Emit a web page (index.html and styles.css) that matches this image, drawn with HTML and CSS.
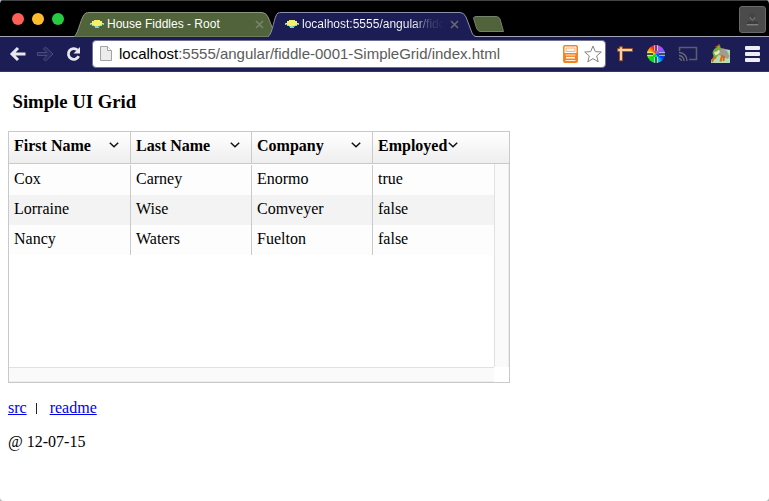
FILE: index.html
```html
<!DOCTYPE html>
<html lang="en">
<head>
<meta charset="utf-8">
<title>Simple UI Grid</title>
<link rel="stylesheet" href="styles.css">
</head>
<body>
<svg width="0" height="0" class="defs">
  <symbol id="saucer" viewBox="0 0 14 8">
    <path d="M0 3H14V5H12V6H10V7H9V8H5V7H4V6H2V5H0z" fill="#8fd6b4"/>
    <path d="M4 0H10V1H12V3H13V5H10V6H4V5H1V3H2V1H4z" fill="#f6f069"/>
    <path d="M4 6h1v1h-1zM8 6h2v1h-2zM1 4h1v1h-1zM12 4h1v1h-1z" fill="#3f9c9a"/>
  </symbol>
  <symbol id="cross" viewBox="0 0 9 9"><path d="M1 1l7 7M8 1l-7 7" fill="none" stroke="currentColor" stroke-width="1.600"/></symbol>
  <symbol id="chevron" viewBox="0 0 10 6"><path d="M.8 .8L5 4.800L9.200 .8" fill="none" stroke="#111" stroke-width="1.500"/></symbol>
</svg>
<div class="window">
  <header class="tabstrip">
    <div class="lights"><i class="red"></i><i class="amber"></i><i class="green"></i></div>
    <div class="tab tab-back">
      <svg class="shape" viewBox="0 0 202 25"><path d="M0 25C5 21 7 3 12 1Q13 .5 16 .5H188Q192 .5 194 5L202 25z" fill="#51633a" stroke="#8b977c"/></svg>
      <svg class="saucer"><use href="#saucer"/></svg><span class="label">House Fiddles - Root</span><svg class="close"><use href="#cross"/></svg>
    </div>
    <div class="tab tab-front">
      <svg class="shape" viewBox="0 0 208 25"><path d="M0 25C5 22 6 3 10 1Q11 .5 14 .5H192Q196 .5 198 5L204 21Q205 24 208 25z" fill="#1b1d54"/><path d="M0 24.500C5 22 6 3 10 1Q11 .5 14 .5H192Q196 .5 198 5L204 21Q205 24 208 24.500" fill="none" stroke="#8d90ad"/></svg>
      <svg class="saucer"><use href="#saucer"/></svg><span class="label faded">localhost:5555/angular/fidd</span><svg class="close"><use href="#cross"/></svg>
    </div>
    <svg class="newtab" viewBox="0 0 31 16"><path d="M.5 2Q1 .5 3 .5H23Q26 .5 27 3L30.500 15.500H7Q4.500 15 3.500 12z" fill="#51633a" stroke="#75836a"/></svg>
    <div class="user"><svg viewBox="0 0 26 26"><path d="M10 9Q10 6.500 13 6.500Q16 6.500 16 9Q16 12.500 13 13.500Q10 12.500 10 9z" fill="#454545"/><path d="M10.500 10.500Q11.500 13.500 13 13.500Q14.500 13.500 15.500 10.500" fill="none" stroke="#858585"/><path d="M7 18Q7 14.500 11 14.500L13 15.500L15 14.500Q19 14.500 19 18z" fill="#3e3e3e"/><path d="M7 18.500h12" stroke="#999"/></svg></div>
  </header>
  <nav class="toolbar">
    <svg class="back" viewBox="0 0 16 16"><path d="M16 8H3M8.500 2L2.500 8L8.500 14" fill="none" stroke="#e8e7f0" stroke-width="3"/></svg>
    <svg class="forward" viewBox="0 0 17 16"><path d="M.5 6.500H10L6.500 3L8.500 1L16 8L8.500 15L6.500 13L10 9.500H.5z" fill="#272a60" stroke="#4a4d7c"/></svg>
    <svg class="reload" viewBox="0 0 15 16"><path d="M11.500 4A5.400 5.400 0 1 0 12.700 10.200" fill="none" stroke="#e8e7f0" stroke-width="2.800"/><path d="M14 1v6.500H7.500z" fill="#e8e7f0"/></svg>
    <div class="address">
      <svg class="page" viewBox="0 0 12 15"><path d="M.5 .5H7.500L11.500 4.500V14.500H.5z" fill="#ececec" stroke="#a3a3a3"/><path d="M7.500 .5V4.500H11.500" fill="#fff" stroke="#a3a3a3"/></svg>
      <span class="url"><b>localhost</b>:5555/angular/fiddle-0001-SimpleGrid/index.html</span>
      <svg class="reader" viewBox="0 0 15 18"><rect x=".8" y=".8" width="13.400" height="16.400" rx="1.200" fill="#fff" stroke="#f58220" stroke-width="1.500"/><path d="M3 3h9v3.500H3z" fill="#fff3e6" stroke="#f9a35a" stroke-width=".8"/><path d="M1 8h13v9H1z" fill="#f58220"/><path d="M2.500 10h10M2.500 15.500h10" stroke="#ffe9d2" stroke-width="1"/><path d="M3 12.700h9" stroke="#fff" stroke-width="1.600"/></svg>
      <svg class="star" viewBox="0 0 18 18"><path d="M9 1L11.300 6.600L17.300 7L12.700 10.900L14.200 16.800L9 13.600L3.800 16.800L5.300 10.900L.7 7L6.700 6.600z" fill="#fff" stroke="#858585"/></svg>
    </div>
    <svg class="ruler" viewBox="0 0 16 16"><path d="M2.500 .8H5.500V2.500H15.500V5.500H5.500V14.800H2.500V5.500H.6V2.500H2.500z" fill="#f7cfa0" stroke="#945022"/></svg>
    <div class="wheel"><svg viewBox="0 0 18 18"><path d="M9 0v6M9 12v6M0 9h6M12 9h6" stroke="#fff" stroke-width="3"/><path d="M9 0v6M9 12v6M0 9h6M12 9h6" stroke="#111" stroke-width="1.400"/></svg></div>
    <svg class="cast" viewBox="0 0 20 16"><path d="M1.500 5V1.500H18.500V13.500H11" fill="none" stroke="#5b5d6c" stroke-width="1.600"/><path d="M1 6.500A8 8 0 0 1 9 15M1 9.500A5.200 5.200 0 0 1 6 15M1 12.300A3 3 0 0 1 3.500 15" fill="none" stroke="#6c6d78" stroke-width="1.300"/></svg>
    <svg class="frog" viewBox="0 0 19 19">
      <path d="M0 19V16L6 11L13 5L19 6V19z" fill="#b4ddb6"/>
      <path d="M8 4L13 4.500L16 7L18.500 12L17 15L12 13L8 11z" fill="#a39c93"/>
      <path d="M1.500 9Q2 5 5.500 3.500L7 1L9 1.500L10 5L8.500 10L5 14L1.500 16L2.500 12z" fill="#7cab3c"/>
      <path d="M3 8Q6 8 8 5.500L9 8Q7 12 4 11z" fill="#dfe8bf"/>
      <path d="M1 18L2.500 14.500L5 13.500M9.500 17.500L11 12L13 13L12.500 17" fill="none" stroke="#d9681b" stroke-width="2"/>
      <path d="M7.500 .5L9 1.500M4.500 3L6 2.500" stroke="#cf3d1b" stroke-width="1.500"/>
    </svg>
    <div class="menu"><i></i><i></i><i></i></div>
  </nav>
  <main>
    <h3>Simple UI Grid</h3>
    <section class="grid">
      <div class="row head">
        <div class="cell"><span>First Name</span><svg class="chev"><use href="#chevron"/></svg></div>
        <div class="cell"><span>Last Name</span><svg class="chev"><use href="#chevron"/></svg></div>
        <div class="cell"><span>Company</span><svg class="chev"><use href="#chevron"/></svg></div>
        <div class="cell"><span>Employed</span><svg class="chev"><use href="#chevron"/></svg></div>
      </div>
      <div class="body">
        <div class="rows">
          <div class="row"><div class="cell">Cox</div><div class="cell">Carney</div><div class="cell">Enormo</div><div class="cell">true</div></div>
          <div class="row"><div class="cell">Lorraine</div><div class="cell">Wise</div><div class="cell">Comveyer</div><div class="cell">false</div></div>
          <div class="row"><div class="cell">Nancy</div><div class="cell">Waters</div><div class="cell">Fuelton</div><div class="cell">false</div></div>
        </div>
        <div class="vscroll"></div>
        <div class="hscroll"></div>
      </div>
    </section>
    <p class="links"><a href="#">src</a><i class="bar"></i><a href="#">readme</a></p>
    <p class="date">@ 12-07-15</p>
  </main>
</div>
</body>
</html>
```
FILE: styles.css
```css
* { box-sizing: border-box; }
body { margin: 0; background: #b5b5b5; font-family: "Liberation Serif", serif; font-size: 16px; color: #000; overflow: hidden; }
svg { display: block; flex: none; }
.defs { position: absolute; }
.window { width: 769px; height: 501px; background: #fff; border-radius: 4px; overflow: hidden; }

.tabstrip { display: flex; height: 37px; padding-top: 12px; background: #000; border-top: 1px solid #444; border-bottom: 1px solid #a3a4b4; font-family: "Liberation Sans", sans-serif; }
.lights { display: flex; gap: 8px; width: 74px; padding-left: 12px; }
.lights i { width: 12px; height: 12px; border-radius: 50%; }
.red { background: #ff5f57; }
.amber { background: #ffbd2e; }
.green { background: #28ca42; }
.tab { position: relative; display: flex; align-items: center; height: 25px; margin-top: -1px; padding-bottom: 1px; color: #fff; font-size: 12px; flex: none; }
.tab-back { width: 202px; padding-left: 16px; }
.tab-front { width: 208px; margin-left: -8px; padding-left: 17px; z-index: 1; }
.shape { position: absolute; left: 0; top: 0; width: 100%; height: 25px; }
.saucer { position: relative; width: 14px; height: 8px; margin-right: 3px; }
.label { position: relative; width: 148px; white-space: nowrap; overflow: hidden; }
.faded { width: 143px; background: linear-gradient(90deg, #fff 78%, #55577c 88%, #1b1d54); -webkit-background-clip: text; background-clip: text; color: transparent; }
.close { position: relative; width: 9px; height: 9px; }
.tab-back .close { color: #79846a; }
.tab-front .close { margin-left: 5px; color: #686971; }
.newtab { width: 31px; height: 16px; margin: 3px 0 0 -3px; }
.user { width: 27px; height: 27px; margin: -7px 3px 0 auto; border: 1px solid #696969; border-radius: 3px; background: #4b4b4b; }

.toolbar { display: flex; align-items: center; height: 35px; padding: 0 9px 1px 9px; background: #1b1d54; border-bottom: 1px solid #34365f; }
.back { width: 17px; height: 16px; }
.forward { width: 17px; height: 16px; margin-left: 11px; }
.reload { width: 15px; height: 16px; margin-left: 12px; }
.address { display: flex; align-items: center; width: 514px; height: 28px; margin-left: 11px; padding: 0 3px 0 7px; background: #fff; border: 1px solid #6e7093; border-radius: 4px; flex: none; }
.page { width: 12px; height: 15px; }
.url { margin-left: 7px; font: 15px "Liberation Sans", sans-serif; color: #5b5b5b; white-space: nowrap; }
.url b { font-weight: normal; color: #000; }
.reader { width: 15px; height: 18px; margin-left: auto; }
.star { width: 18px; height: 18px; margin-left: 6px; }
.ruler { width: 16px; height: 16px; margin-left: 11px; }
.wheel { width: 18px; height: 18px; margin-left: 14px; border-radius: 50%; background: conic-gradient(#ff3fd2, #a050ff 45deg, #2778ff 90deg, #0030ff 115deg, #00c8e8 155deg, #00e060 190deg, #10d910 230deg, #d2e800 275deg, #ff9b00 305deg, #ff2020 335deg, #ff3fd2); }
.cast { width: 20px; height: 16px; margin-left: 13px; }
.frog { width: 19px; height: 19px; margin-left: 13px; }
.menu { display: flex; flex-direction: column; gap: 2px; width: 15px; margin-left: auto; }
.menu i { height: 4px; border-radius: 1px; background: #eeedf3; }

main { padding: 0 8px; }
h3 { margin: 19px 0 0 4.5px; font-size: 18.72px; line-height: 22px; }
.grid { width: 502px; height: 252px; margin-top: 18px; border: 1px solid #c9c9c9; }
.row { display: grid; grid-template-columns: 122px 121px 121px 1fr; }
.cell { height: 30px; padding-left: 5px; line-height: 28px; border-right: 1px solid #cacaca; }
.cell:last-child { border-right: 0; }
.head { height: 32px; background: linear-gradient(#fff, #eee); border-bottom: 1px solid #c9c9c9; font-weight: bold; }
.head .cell { display: flex; justify-content: space-between; height: 31px; padding-right: 11px; line-height: 28px; }
.head .cell:last-child { justify-content: flex-start; }
.head .cell:last-child .chev { margin-left: 1px; }
.chev { width: 10px; height: 6px; margin-top: 10px; }
.body { display: grid; grid-template: 203px 15px / 485px 15px; }
.rows { padding-top: 1px; }
.rows .row { background: #fdfdfd; }
.rows .row:nth-child(even) { background: #f3f3f3; }
.vscroll { background: #fafafa; border-left: 1px solid #e1e1e1; border-right: 1px solid #ececec; }
.hscroll { background: #fafafa; border-top: 1px solid #e1e1e1; border-bottom: 1px solid #ececec; }
.links { display: flex; align-items: center; margin: 16px 0; height: 18px; line-height: 18px; }
.bar { width: 1px; height: 11px; margin: 0 13px 0 9px; background: #222; }
a { color: #00e; }
.date { margin: 0; line-height: 18px; }
```
